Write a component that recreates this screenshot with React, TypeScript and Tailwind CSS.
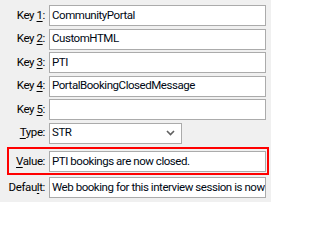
import React from "react";

const font = { fontFamily: 'Roboto, "Liberation Sans", Arial, sans-serif' };

function Label({ pre, u, post, w = "w-[45px]" }: { pre: string; u: string; post: string; w?: string }) {
  return (
    <div className={`${w} shrink-0 text-right text-[11.5px] tracking-[-0.4px] text-black leading-none`}>
      {pre}
      <span className="underline underline-offset-2">{u}</span>
      {post}
    </div>
  );
}

function Box({ text, className = "" }: { text: string; className?: string }) {
  return (
    <div
      className={`ml-[4px] h-[21px] w-[217px] shrink-0 border border-[#ababab] bg-white pl-[2px] flex items-center overflow-hidden whitespace-nowrap text-[11.5px] tracking-[-0.45px] text-[#000814] ${className}`}
    >
      {text}
    </div>
  );
}

export default function App() {
  const keys = ["CommunityPortal", "CustomHTML", "PTI", "PortalBookingClosedMessage", ""];
  return (
    <div className="w-[271px] h-[202px] bg-[#f0f0f0] overflow-hidden pt-[5px]" style={font}>
      <div className="flex flex-col gap-[2.5px]">
        {keys.map((k, i) => (
          <div key={i} className="flex items-center">
            <Label pre="Key " u={String(i + 1)} post=":" />
            <Box text={k} />
          </div>
        ))}
        <div className="flex items-center">
          <Label pre="" u="T" post="ype:" />
          <div className="ml-[4px] h-[21px] w-[133px] border border-[#ababab] bg-white pl-[2px] pr-[5px] flex items-center justify-between text-[11.5px] tracking-[-0.45px] text-[#000814]">
            <span>STR</span>
            <svg width="9" height="6" viewBox="0 0 9 6" className="mr-[1px]">
              <path d="M1 1 L4.5 4.5 L8 1" fill="none" stroke="#606060" strokeWidth="1.6" />
            </svg>
          </div>
        </div>
      </div>
      <div className="ml-[7px] mt-[3.5px] w-[262px] border-2 border-[#ff0000] pt-[2px] pb-[1px] flex items-center">
        <Label pre="" u="V" post="alue:" w="w-[36px]" />
        <Box text="PTI bookings are now closed." />
      </div>
      <div className="mt-[2px] flex items-center">
        <Label pre="Defau" u="l" post="t:" />
        <Box text="Web booking for this interview session is now closed." />
      </div>
    </div>
  );
}
